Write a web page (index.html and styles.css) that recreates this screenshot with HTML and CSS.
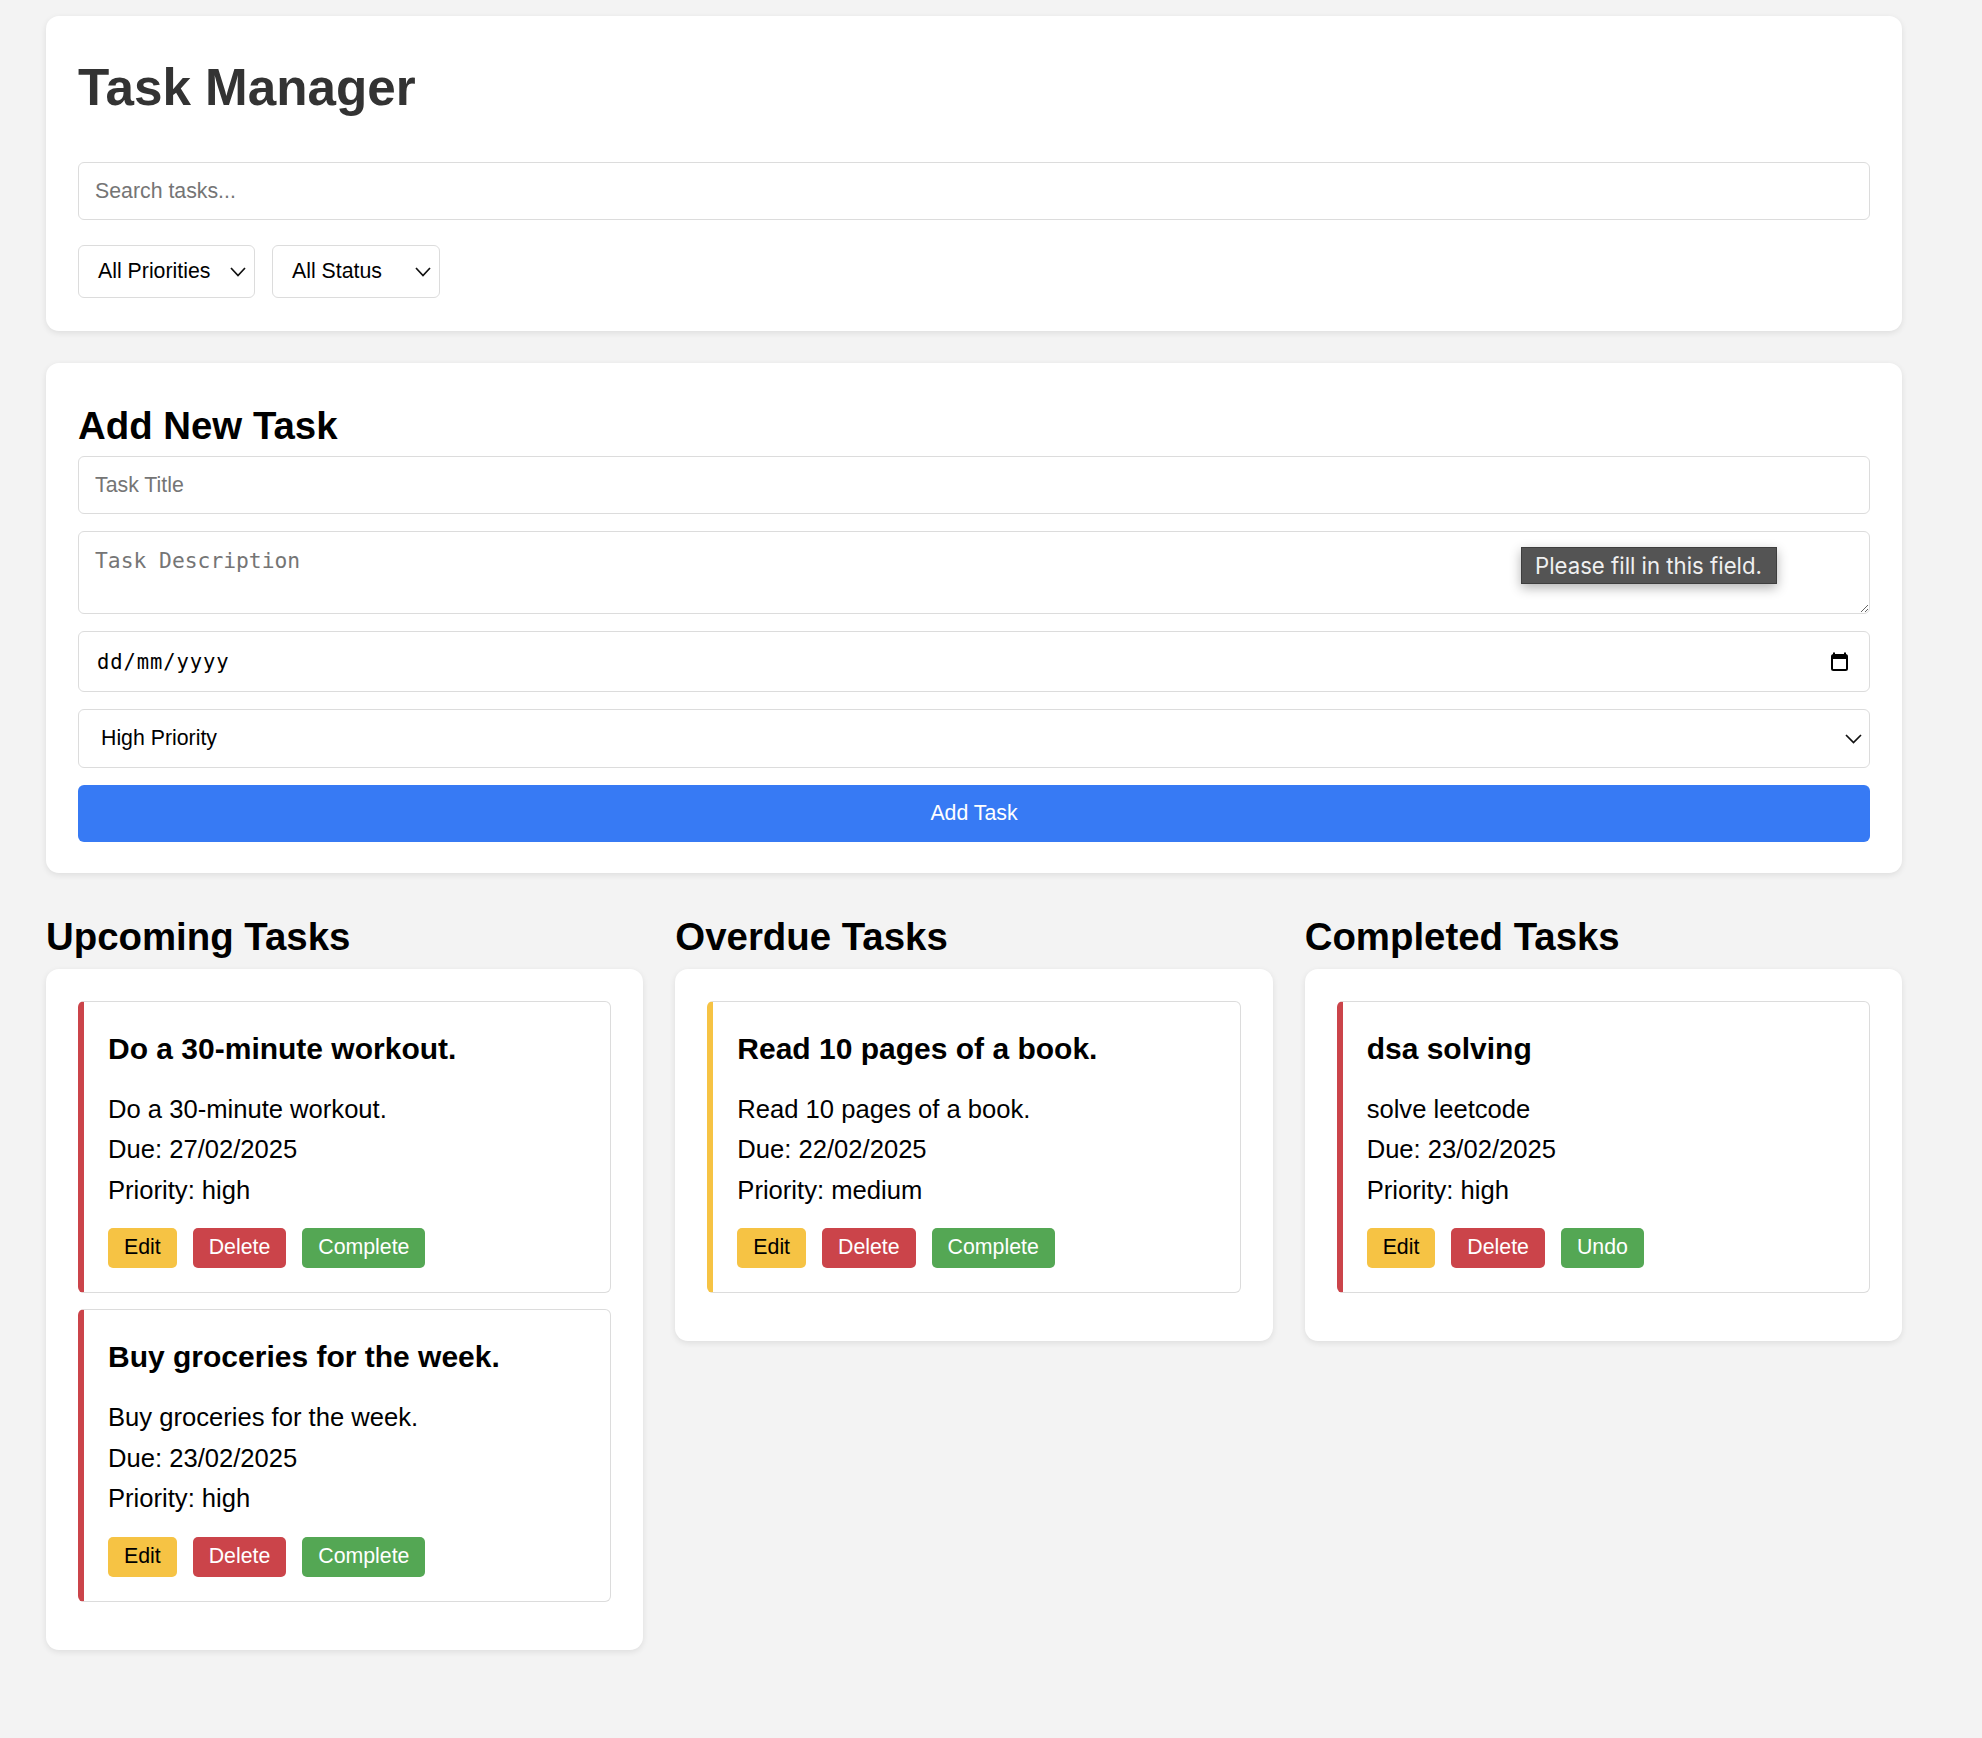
FILE: index.html
```html
<!DOCTYPE html>
<html lang="en">
<head>
<meta charset="utf-8">
<title>Task Manager</title>
<link rel="stylesheet" href="styles.css">
</head>
<body>
<div class="container">
  <section class="card header-card">
    <h1 class="app-title">Task Manager</h1>
    <input class="field search" type="text" placeholder="Search tasks...">
    <div class="filters">
      <div class="select select-priority"><span>All Priorities</span>
        <svg class="chev" width="16" height="10" viewBox="0 0 16 10"><polyline points="1,1 8,8.5 15,1" fill="none" stroke="#111" stroke-width="1.7"/></svg>
      </div>
      <div class="select select-status"><span>All Status</span>
        <svg class="chev" width="16" height="10" viewBox="0 0 16 10"><polyline points="1,1 8,8.5 15,1" fill="none" stroke="#111" stroke-width="1.7"/></svg>
      </div>
    </div>
  </section>

  <section class="card form-card">
    <h2 class="form-title">Add New Task</h2>
    <div class="form-stack">
      <input class="field" type="text" placeholder="Task Title">
      <div class="textarea-wrap">
        <textarea class="field textarea" placeholder="Task Description"></textarea>
        <div class="tooltip">Please fill in this field.</div>
      </div>
      <div class="field date-field">
        <span class="date-text">dd/mm/yyyy</span>
        <svg width="17" height="19" viewBox="0 0 17 19"><rect x="1" y="3" width="15" height="15" rx="1.5" fill="none" stroke="#000" stroke-width="2"/><rect x="1" y="3" width="15" height="4" fill="#000"/><rect x="2" y="0.5" width="2" height="3" fill="#000"/><rect x="13" y="0.5" width="2" height="3" fill="#000"/></svg>
      </div>
      <div class="field select-wide">
        <span>High Priority</span>
        <svg width="17" height="10" viewBox="0 0 17 10"><polyline points="1,1 8.5,8.5 16,1" fill="none" stroke="#111" stroke-width="1.7"/></svg>
      </div>
      <button class="add-btn" type="button">Add Task</button>
    </div>
  </section>

  <div class="columns">
    <div class="column">
      <h2 class="col-title">Upcoming Tasks</h2>
      <div class="card col-card">
        <div class="task high">
          <h3>Do a 30-minute workout.</h3>
          <p>Do a 30-minute workout.</p>
          <p>Due: 27/02/2025</p>
          <p>Priority: high</p>
          <div class="actions"><button class="btn edit">Edit</button><button class="btn delete">Delete</button><button class="btn complete">Complete</button></div>
        </div>
        <div class="task high">
          <h3>Buy groceries for the week.</h3>
          <p>Buy groceries for the week.</p>
          <p>Due: 23/02/2025</p>
          <p>Priority: high</p>
          <div class="actions"><button class="btn edit">Edit</button><button class="btn delete">Delete</button><button class="btn complete">Complete</button></div>
        </div>
      </div>
    </div>
    <div class="column">
      <h2 class="col-title">Overdue Tasks</h2>
      <div class="card col-card">
        <div class="task medium">
          <h3>Read 10 pages of a book.</h3>
          <p>Read 10 pages of a book.</p>
          <p>Due: 22/02/2025</p>
          <p>Priority: medium</p>
          <div class="actions"><button class="btn edit">Edit</button><button class="btn delete">Delete</button><button class="btn complete">Complete</button></div>
        </div>
      </div>
    </div>
    <div class="column">
      <h2 class="col-title">Completed Tasks</h2>
      <div class="card col-card">
        <div class="task high">
          <h3>dsa solving</h3>
          <p>solve leetcode</p>
          <p>Due: 23/02/2025</p>
          <p>Priority: high</p>
          <div class="actions"><button class="btn edit">Edit</button><button class="btn delete">Delete</button><button class="btn complete">Undo</button></div>
        </div>
      </div>
    </div>
  </div>
</div>
</body>
</html>
```

FILE: styles.css
```css
* { box-sizing: border-box; }

body {
  margin: 0;
  background: #f3f3f3;
  font-family: "Liberation Sans", Arial, Helvetica, sans-serif;
  color: #000;
}

.container {
  width: 1856px;
  margin-left: 46px;
  padding: 16px 0 80px;
}

.card {
  background: #fff;
  border-radius: 13px;
  padding: 32px;
  box-shadow: 0 2px 6px rgba(0, 0, 0, 0.09);
}

.header-card { padding-bottom: 33px; }

.app-title {
  margin: 10px 0 44px;
  font-size: 51.2px;
  line-height: 60px;
  font-weight: bold;
  color: #333;
}

.field {
  display: block;
  width: 100%;
  height: 58px;
  border: 1px solid #dcdcdc;
  border-radius: 6px;
  background: #fff;
  padding: 0 16px;
  font-family: "Liberation Sans", Arial, sans-serif;
  font-size: 21.3px;
  color: #000;
  outline: none;
}

.field::placeholder { color: #757575; }

.filters {
  display: flex;
  gap: 17px;
  margin-top: 25px;
}

.select {
  display: flex;
  align-items: center;
  justify-content: space-between;
  height: 53px;
  border: 1px solid #dcdcdc;
  border-radius: 6px;
  padding: 0 8px 0 19px;
  font-size: 21.3px;
}

.select-priority { width: 177px; }
.select-status { width: 168px; }

.chev { display: block; }

.form-card {
  margin-top: 32px;
  padding-bottom: 31px;
}

.form-title {
  margin: 9px 0 8px;
  font-size: 38.4px;
  line-height: 44px;
  font-weight: bold;
}

.form-stack {
  display: flex;
  flex-direction: column;
  gap: 17px;
}

.textarea-wrap { position: relative; }

.textarea {
  height: 83px;
  padding: 16px;
  font-family: "DejaVu Sans Mono", Menlo, monospace;
  font-size: 21.3px;
  resize: vertical;
}

.tooltip {
  position: absolute;
  top: 16px;
  right: 93px;
  width: 256px;
  height: 37px;
  padding: 0 13px;
  display: flex;
  align-items: center;
  background: #545454;
  border: 1px solid #3e3e3e;
  color: #f0f0f0;
  font-family: Inter, "Open Sans", sans-serif;
  font-size: 22.2px;
  white-space: nowrap;
  box-shadow: 0 4px 12px rgba(0, 0, 0, 0.3);
}

.date-field {
  display: flex;
  align-items: center;
  justify-content: space-between;
  height: 61px;
  padding: 0 21px 0 18px;
}

.date-text {
  font-family: "DejaVu Sans Mono", Menlo, monospace;
  font-size: 20.5px;
  letter-spacing: 0.9px;
}

.select-wide {
  display: flex;
  align-items: center;
  justify-content: space-between;
  height: 59px;
  padding: 0 7px 0 22px;
}

.add-btn {
  display: block;
  width: 100%;
  height: 57px;
  border: none;
  border-radius: 6px;
  background: #377af4;
  color: #fff;
  font-family: "Liberation Sans", Arial, sans-serif;
  font-size: 21.3px;
}

.columns {
  display: grid;
  grid-template-columns: repeat(3, 1fr);
  gap: 32px;
  align-items: start;
  margin-top: 42px;
}

.col-title {
  margin: 0 0 9.5px;
  font-size: 38.4px;
  line-height: 44px;
  font-weight: bold;
}

.task {
  border: 1px solid #dcdcdc;
  border-left: 6.5px solid #cb444a;
  border-radius: 6px;
  padding: 24px;
  margin-bottom: 16.5px;
}

.task.medium { border-left-color: #f6c344; }

.task h3 {
  margin: 5px 0 22px;
  font-size: 30px;
  line-height: 36px;
  font-weight: bold;
}

.task p {
  margin: 0;
  font-size: 25.6px;
  line-height: 40.5px;
}

.actions {
  display: flex;
  gap: 16px;
  margin-top: 17.6px;
}

.btn {
  height: 40.4px;
  padding: 0 16px;
  border: none;
  border-radius: 5px;
  font-family: "Liberation Sans", Arial, sans-serif;
  font-size: 21.3px;
  color: #fff;
}

.btn.edit { background: #f6c344; color: #000; }
.btn.delete { background: #cb444a; }
.btn.complete { background: #54a754; }
```
